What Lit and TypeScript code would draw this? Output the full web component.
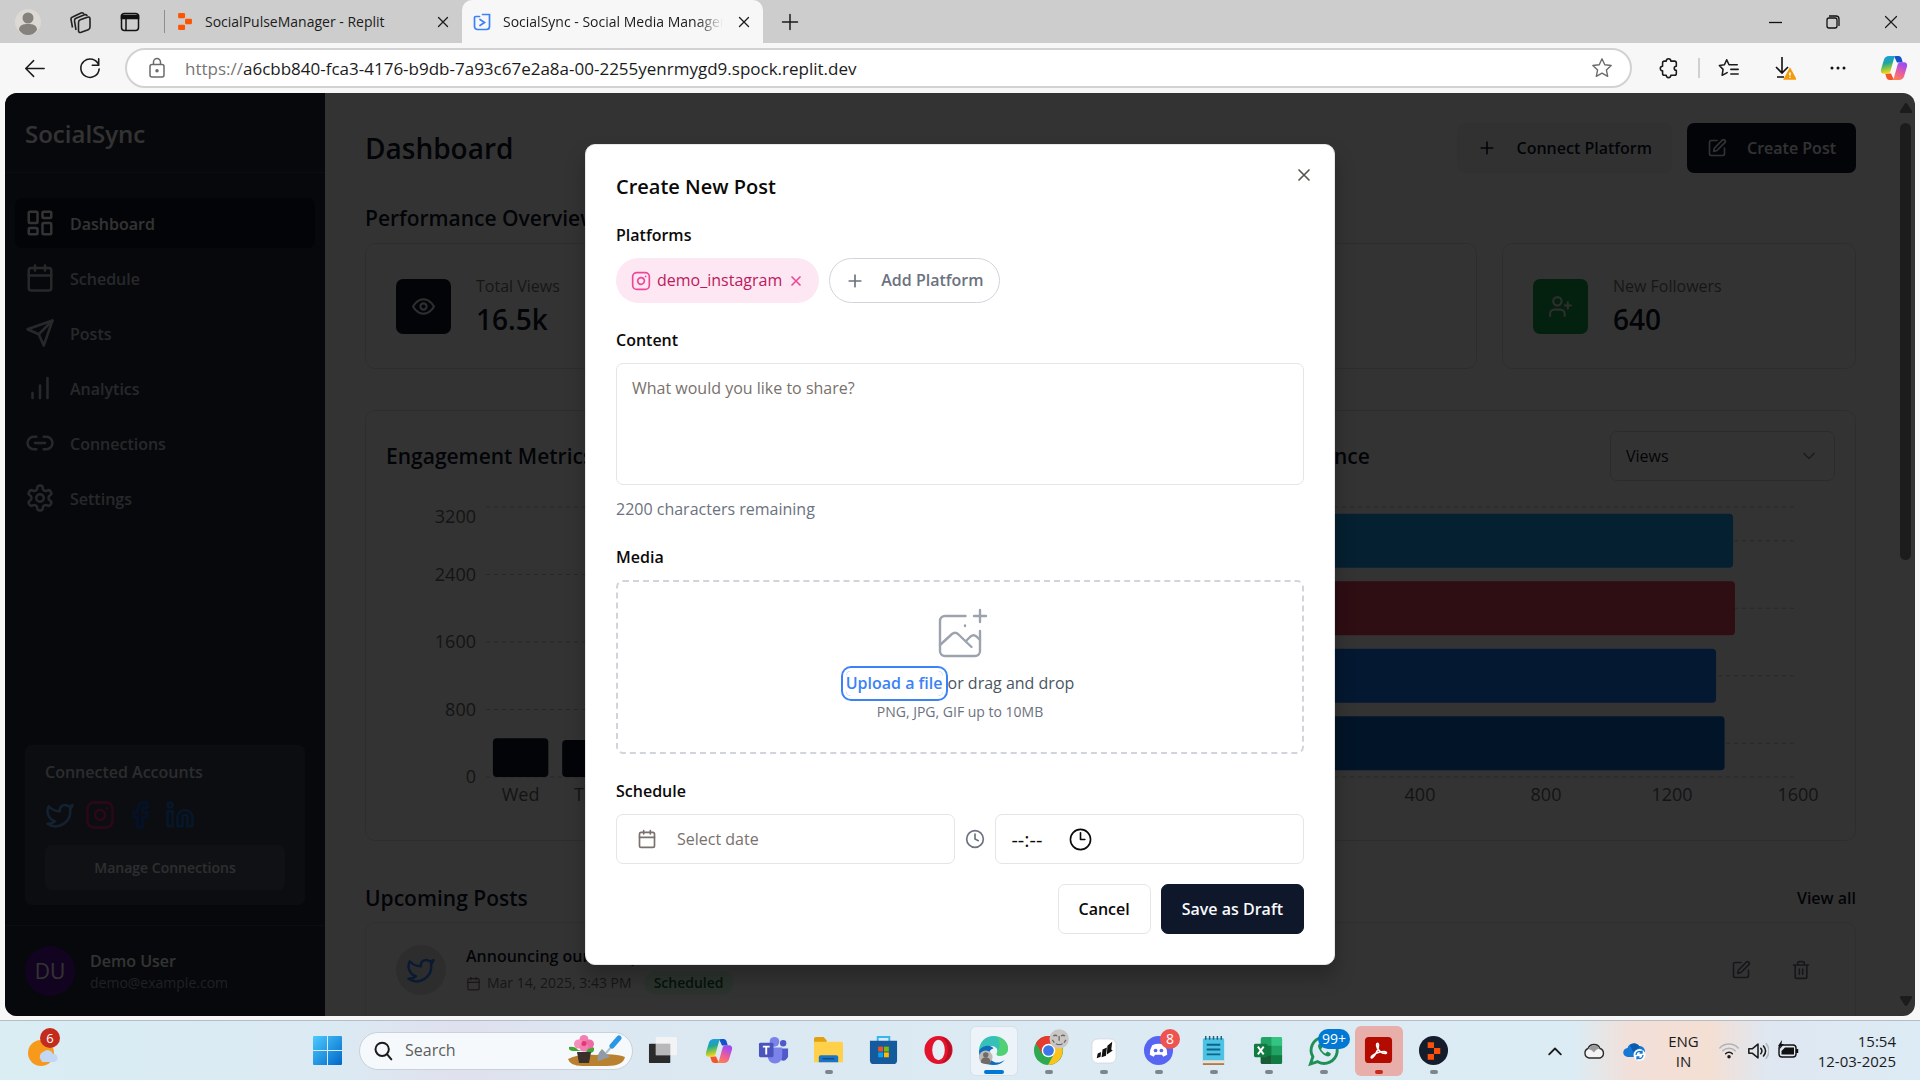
import { LitElement, html, svg, css, nothing } from "lit";
import { customElement } from "lit/decorators.js";

/* ---------- icons ---------- */

const line = (body: unknown, size = 20, width = 2) => html`<svg
  width=${size} height=${size} viewBox="0 0 24 24" fill="none" stroke="currentColor"
  stroke-width=${width} stroke-linecap="round" stroke-linejoin="round" aria-hidden="true">${body}</svg>`;

const P = {
  grid: svg`<rect x="3" y="3" width="7" height="9" rx="1"/><rect x="14" y="3" width="7" height="5" rx="1"/><rect x="14" y="12" width="7" height="9" rx="1"/><rect x="3" y="16" width="7" height="5" rx="1"/>`,
  calendar: svg`<path d="M8 2v4M16 2v4"/><rect x="3" y="4" width="18" height="18" rx="2"/><path d="M3 10h18"/>`,
  send: svg`<path d="m22 2-7 20-4-9-9-4Z"/><path d="M22 2 11 13"/>`,
  bars: svg`<path d="M6 20v-4M12 20V10M18 20V4"/>`,
  link: svg`<path d="M9 17H7A5 5 0 0 1 7 7h2"/><path d="M15 7h2a5 5 0 1 1 0 10h-2"/><path d="M8 12h8"/>`,
  gear: svg`<path d="M12.22 2h-.44a2 2 0 0 0-2 2v.18a2 2 0 0 1-1 1.73l-.43.25a2 2 0 0 1-2 0l-.15-.08a2 2 0 0 0-2.73.73l-.22.38a2 2 0 0 0 .73 2.73l.15.1a2 2 0 0 1 1 1.72v.51a2 2 0 0 1-1 1.74l-.15.09a2 2 0 0 0-.73 2.73l.22.38a2 2 0 0 0 2.73.73l.15-.08a2 2 0 0 1 2 0l.43.25a2 2 0 0 1 1 1.73V20a2 2 0 0 0 2 2h.44a2 2 0 0 0 2-2v-.18a2 2 0 0 1 1-1.73l.43-.25a2 2 0 0 1 2 0l.15.08a2 2 0 0 0 2.73-.73l.22-.39a2 2 0 0 0-.73-2.73l-.15-.08a2 2 0 0 1-1-1.74v-.5a2 2 0 0 1 1-1.74l.15-.09a2 2 0 0 0 .73-2.73l-.22-.38a2 2 0 0 0-2.73-.73l-.15.08a2 2 0 0 1-2 0l-.43-.25a2 2 0 0 1-1-1.73V4a2 2 0 0 0-2-2z"/><circle cx="12" cy="12" r="3"/>`,
  twitter: svg`<path d="M22 4s-.7 2.1-2 3.4c1.6 10-9.4 17.3-18 11.6 2.2.1 4.4-.6 6-2C3 15.500.5 9.600 3 5c2.200 2.600 5.600 4.100 9 4-.9-4.200 4-6.600 7-3.800 1.100 0 3-1.200 3-1.200z"/>`,
  instagram: svg`<rect x="2" y="2" width="20" height="20" rx="5"/><path d="M16 11.370A4 4 0 1 1 12.630 8 4 4 0 0 1 16 11.370z"/><path d="M17.500 6.500h.01"/>`,
  facebook: svg`<path d="M18 2h-3a5 5 0 0 0-5 5v3H7v4h3v8h4v-8h3l1-4h-4V7a1 1 0 0 1 1-1h3z"/>`,
  linkedin: svg`<path d="M16 8a6 6 0 0 1 6 6v7h-4v-7a2 2 0 0 0-4 0v7h-4v-7a6 6 0 0 1 6-6z"/><rect x="2" y="9" width="4" height="12"/><circle cx="4" cy="4" r="2"/>`,
  plus: svg`<path d="M5 12h14M12 5v14"/>`,
  close: svg`<path d="M18 6 6 18M6 6l12 12"/>`,
  edit: svg`<path d="M12 3H5a2 2 0 0 0-2 2v14a2 2 0 0 0 2 2h14a2 2 0 0 0 2-2v-7"/><path d="M18.375 2.625a2.120 2.120 0 0 1 3 3L12 15l-4 1 1-4Z"/>`,
  eye: svg`<path d="M2 12s3.500-7 10-7 10 7 10 7-3.500 7-10 7-10-7-10-7Z"/><circle cx="12" cy="12" r="3"/>`,
  userPlus: svg`<path d="M16 21v-2a4 4 0 0 0-4-4H6a4 4 0 0 0-4 4v2"/><circle cx="9" cy="7" r="4"/><path d="M19 8v6M22 11h-6"/>`,
  heart: svg`<path d="M19 14c1.490-1.460 3-3.210 3-5.500A5.500 5.500 0 0 0 16.500 3c-1.760 0-3 .5-4.500 2-1.500-1.500-2.740-2-4.500-2A5.500 5.500 0 0 0 2 8.500c0 2.300 1.500 4.050 3 5.500l7 7Z"/>`,
  trash: svg`<path d="M3 6h18M19 6v14a2 2 0 0 1-2 2H7a2 2 0 0 1-2-2V6M8 6V4a2 2 0 0 1 2-2h4a2 2 0 0 1 2 2v2M10 11v6M14 11v6"/>`,
  chevron: svg`<path d="m6 9 6 6 6-6"/>`,
  clock: svg`<circle cx="12" cy="12" r="10"/><path d="M12 6v6l4 2"/>`,
};

const copilot = (size: number) => html`<svg width=${size} height=${size} viewBox="0 0 28 28" aria-hidden="true">
  <defs>
    <linearGradient id="cpa" x1="0" y1="0" x2="0.2" y2="1"><stop offset="0" stop-color="#1b9cf2"/><stop offset=".45" stop-color="#1fa6a0"/><stop offset=".75" stop-color="#8cc63f"/><stop offset="1" stop-color="#f7d31e"/></linearGradient>
    <linearGradient id="cpb" x1="0.4" y1="0" x2="0" y2="1"><stop offset="0" stop-color="#a24df0"/><stop offset=".5" stop-color="#ee5f97"/><stop offset="1" stop-color="#ff8a3c"/></linearGradient>
  </defs>
  <path fill="#1552c8" d="M14 2h4.500c1.700 0 2.600 1 3.100 2.500l1.200 4H17z"/>
  <path fill="#f2552c" d="M14 26H9.500c-1.700 0-2.600-1-3.100-2.500l-1.200-4H11z"/>
  <path fill="url(#cpa)" d="M9 2h7.500c-1.300 0-2.100 1-2.600 2.700L10.500 17c-.5 1.800-1.600 2.800-3.300 2.800H4C1.500 19.800.4 18 1 15.400L4 5.500C4.800 3.200 6.400 2 9 2z"/>
  <path fill="url(#cpb)" d="M19 26h-7.500c1.300 0 2.100-1 2.600-2.700L17.500 11c.5-1.800 1.600-2.800 3.300-2.800H24c2.500 0 3.600 1.800 3 4.400l-3 9.900c-.8 2.300-2.400 3.500-5 3.500z"/>
</svg>`;

const replitMark = (s: number) => html`<svg width=${s} height=${s} viewBox="0 0 16 16" fill="#fd5402" aria-hidden="true">
  <rect x="2" y="0" width="6.500" height="5" rx="1"/><rect x="8.500" y="5.300" width="6.500" height="5.200" rx="1"/><rect x="2" y="11" width="6.500" height="5" rx="1"/></svg>`;

/* ---------- shared styles ---------- */

const base = css`
  :host { display: block; font-family: "Open Sans", "Noto Sans", sans-serif; font-size: 16px; line-height: 25px; }
  *, *::before, *::after { box-sizing: border-box; }
  button, input, textarea, select { font: inherit; color: inherit; margin: 0; }
  button { background: none; border: 0; padding: 0; display: inline-flex; align-items: center; justify-content: center; cursor: pointer; }
  a { color: inherit; text-decoration: none; }
  h1, h2, h3, p, ul { margin: 0; padding: 0; }
  ul { list-style: none; }
  svg { display: block; flex: none; }
`;

/* ---------- browser window frame ---------- */

@customElement("browser-frame")
export class BrowserFrame extends LitElement {
  static styles = [base, css`
    :host { color: #1b1b1b; font-size: 15px; }
    .tabs { height: 43px; background: #cdcdcd; display: flex; align-items: center; }
    .tools { display: flex; align-items: center; justify-content: space-between; padding: 0 24px 0 15px; width: 165px; height: 23px; border-right: 1px solid #8e8e8e; }
    .tab { display: flex; align-items: center; height: 43px; padding: 0 10px 0 11px; gap: 12px; }
    .tab.idle { width: 297px; }
    .tab.active { width: 301px; background: #f7f7f7; border-radius: 10px 10px 0 0; }
    .name { flex: 1; min-width: 0; overflow: hidden; white-space: nowrap; font-size: 14px; }
    .tab.active .name { mask-image: linear-gradient(to right, #000 88%, transparent); }
    .new { margin-left: 18px; }
    .window { margin-left: auto; display: flex; gap: 37px; padding-right: 18px; align-items: center; }
    .bar { height: 50px; background: #f7f7f7; display: flex; align-items: center; padding: 0 12px 0 24px; }
    .reload { margin: 0 24px 0 34px; }
    .address { flex: 1; height: 40px; border: 2px solid #d2d2d2; border-radius: 20px; background: #fff; display: flex; align-items: center; padding: 0 17px 0 21px; gap: 19px; font-size: 17px; }
    .url { flex: 1; white-space: nowrap; }
    .scheme { color: #767676; }
    .star { color: #6b6b6b; }
    .actions { display: flex; align-items: center; gap: 32px; margin-left: 26px; }
    .sep { width: 2px; height: 20px; background: #d0d0d0; margin: 0 -14px 0 -14px; }
  `];

  render() {
    const x = line(P.close, 18, 1.700);
    return html`
      <div class="tabs">
        <div class="tools">
          <svg width="26" height="28" viewBox="0 0 26 28"><circle cx="13" cy="14" r="13" fill="#dcd9d4"/><circle cx="13" cy="10" r="5.500" fill="#85817d"/><path d="M4 22c0-5 4-6 9-6s9 1 9 6c-2 3-5 5-9 5s-7-2-9-5z" fill="#85817d"/></svg>
          <button aria-label="Workspaces"><svg width="24" height="24" viewBox="0 0 24 24" fill="#cdcdcd" stroke="#222" stroke-width="1.600" stroke-linejoin="round"><path d="M3.500 17.500 2 9.500Q1.700 7.500 3.600 7L12 3q2-.8 3 1"/><path d="M7 20 5.500 11Q5.200 9 7 8.300l8.500-3.500q2-.6 2.800 1"/><path d="M9.500 12.500q0-2 1.800-2.700l7-2.600q2.700-.8 2.700 1.800v8q0 2-1.800 2.700l-7 2.600q-2.700.8-2.700-1.800z"/></svg></button>
          <button aria-label="Tab actions"><svg width="20" height="20" viewBox="0 0 20 20" fill="none" stroke="#111" stroke-width="1.500"><rect x="1.500" y="1.500" width="17" height="17" rx="3"/><path d="M1.500 3.500h17v3h-17z" fill="#111"/><path d="M6 6v12"/></svg></button>
        </div>
        <div class="tab idle">${replitMark(17)}<span class="name">SocialPulseManager - Replit</span><button aria-label="Close tab">${x}</button></div>
        <div class="tab active">
          <svg width="18" height="18" viewBox="0 0 18 18" fill="none" stroke="#3b82f6" stroke-width="1.700" stroke-linecap="round"><path d="M9.500 1.500H16.500v12a3 3 0 0 1-3 3h-9a3 3 0 0 1-3-3v-9q0-1 1-1h4"/><path d="m7 6.500 4.500 3L7 12.500"/></svg>
          <span class="name">SocialSync - Social Media Management</span><button aria-label="Close tab">${x}</button>
        </div>
        <button class="new" aria-label="New tab">${line(svg`<path d="M2 12h20M12 2v20"/>`, 18, 2)}</button>
        <div class="window">
          <button aria-label="Minimize"><svg width="20" height="20" viewBox="0 0 20 20" stroke="#111" stroke-width="1.300"><path d="M3 10.500h13"/></svg></button>
          <button aria-label="Restore"><svg width="20" height="20" viewBox="0 0 20 20" stroke="#111" stroke-width="1.300" fill="none"><rect x="4" y="6" width="10" height="10" rx="2"/><path d="M6 4h7a3 3 0 0 1 3 3v7"/></svg></button>
          <button aria-label="Close">${line(P.close, 22, 1.300)}</button>
        </div>
      </div>
      <div class="bar">
        <button aria-label="Back">${line(svg`<path d="M23 12H2M11 3l-9 9 9 9"/>`, 21, 1.700)}</button>
        <button class="reload" aria-label="Reload">${line(svg`<path d="M21.500 9A10 10 0 1 0 22 13M21.500 2v7h-7"/>`, 22, 1.700)}</button>
        <div class="address">
          <svg width="18" height="22" viewBox="0 0 18 22" fill="none" stroke="#6b6b6b" stroke-width="1.500"><rect x="2" y="7.500" width="14" height="12.500" rx="2"/><path d="M5.500 7.500V5a3.500 3.500 0 0 1 7 0v2.500"/><circle cx="9" cy="13.800" r="1" fill="#6b6b6b"/></svg>
          <span class="url"><span class="scheme">https://</span>a6cbb840-fca3-4176-b9db-7a93c67e2a8a-00-2255yenrmygd9.spock.replit.dev</span>
          <button class="star" aria-label="Favorite">${line(svg`<path d="m12 2 3 6.500 7 .8-5.200 4.800 1.400 7L12 17.600l-6.200 3.500 1.400-7L2 9.300l7-.8z"/>`, 22, 1.500)}</button>
        </div>
        <div class="actions">
          <button aria-label="Extensions">${line(svg`<path d="M9 4.500a2.500 2.500 0 0 1 5 0h4a2 2 0 0 1 2 2V10a2.300 2.300 0 1 0 0 4.600V18a2 2 0 0 1-2 2h-4a2.500 2.500 0 0 1-5 0H7a2 2 0 0 1-2-2v-3a2.500 2.500 0 0 1 0-5V6.500a2 2 0 0 1 2-2z"/>`, 22, 1.700)}</button>
          <span class="sep"></span>
          <button aria-label="Favorites">${line(svg`<path d="m9.500 3 2.500 5.500h9M9.500 3 7 8.500l-5.500.7 4 4.300-1 6.500 5.500-3M14 13.500h8M14 18.500h8"/>`, 22, 1.700)}</button>
          <button aria-label="Downloads"><svg width="24" height="24" viewBox="0 0 24 24" fill="none" stroke="#111" stroke-width="1.600"><path d="M10 1v16M4 11l6 6 6-6M5 21h7"/><path d="m18 13 5.500 10h-11z" fill="#f59b0b" stroke="#f59b0b"/><path d="M18 16.500v3M18 20.700v1" stroke="#fff"/></svg></button>
          <button aria-label="Menu"><svg width="20" height="20" viewBox="0 0 20 20" fill="#111"><circle cx="4" cy="10" r="1.500"/><circle cx="10" cy="10" r="1.500"/><circle cx="16" cy="10" r="1.500"/></svg></button>
          <button aria-label="Copilot">${copilot(28)}</button>
        </div>
      </div>`;
  }
}

/* ---------- sidebar ---------- */

const NAV = [
  ["Dashboard", P.grid], ["Schedule", P.calendar], ["Posts", P.send],
  ["Analytics", P.bars], ["Connections", P.link], ["Settings", P.gear],
] as const;

@customElement("side-nav")
export class SideNav extends LitElement {
  static styles = [base, css`
    :host { width: 320px; flex: none; background: #1f2937; color: #fff; display: flex; flex-direction: column; }
    .brand { height: 80px; padding: 2px 20px 0; display: flex; align-items: center; border-bottom: 1px solid #374151; font-size: 24px; font-weight: 600; }
    .nav { flex: 1; padding: 25px 10px; display: flex; flex-direction: column; gap: 5px; }
    .item { height: 50px; padding: 0 10px; gap: 15px; display: flex; align-items: center; border-radius: 7px; color: #c3c8d0; font-weight: 600; }
    .item span { padding-top: 2px; }
    .item.on { background: #0f172a; color: #fff; }
    .accounts { margin: 0 20px 20px; padding: 15px 20px; background: #374151; border-radius: 7px; display: flex; flex-direction: column; gap: 15px; }
    .accounts h3 { font-size: 16px; font-weight: 600; color: #d9dce1; }
    .icons { display: flex; gap: 10px; }
    .tw { color: #60a5fa; } .ig { color: #db2777; } .fb { color: #1557d0; } .in { color: #1f70d6; }
    .manage { height: 45px; background: #4b5563; border-radius: 7px; font-size: 14px; font-weight: 600; color: #e5e7eb; }
    .user { border-top: 1px solid #374151; padding: 20px; display: flex; align-items: center; gap: 15px; }
    .avatar { width: 50px; height: 50px; border-radius: 50%; background: #5b10a0; display: grid; place-items: center; font-size: 21px; }
    .who { font-weight: 600; line-height: 24px; }
    .mail { font-size: 14px; line-height: 20px; color: #9ca3af; }
  `];

  render() {
    return html`
      <div class="brand">SocialSync</div>
      <nav class="nav">
        ${NAV.map(([name, icon], i) => html`<a href="#" class="item ${i === 0 ? "on" : ""}">${line(icon, 30)}<span>${name}</span></a>`)}
      </nav>
      <section class="accounts">
        <h3>Connected Accounts</h3>
        <div class="icons">
          <span class="tw">${line(P.twitter, 30)}</span><span class="ig">${line(P.instagram, 30)}</span>
          <span class="fb">${line(P.facebook, 30)}</span><span class="in">${line(P.linkedin, 30)}</span>
        </div>
        <button class="manage">Manage Connections</button>
      </section>
      <div class="user">
        <span class="avatar">DU</span>
        <div><p class="who">Demo User</p><p class="mail">demo@example.com</p></div>
      </div>`;
  }
}

/* ---------- dashboard ---------- */

const STATS = [
  { label: "Total Views", value: "16.5k", icon: P.eye, tone: "navy" },
  { label: "Engagement", value: "8.2k", icon: P.heart, tone: "pink" },
  { label: "Posts", value: "24", icon: P.send, tone: "blue" },
  { label: "New Followers", value: "640", icon: P.userPlus, tone: "green" },
];
const DAYS: [string, number][] = [["Wed", 460], ["Thu", 440], ["Fri", 1400], ["Sat", 2200], ["Sun", 2600], ["Mon", 2800], ["Tue", 3000], ["Wed", 2900]];
const NETWORKS: [string, number, string][] = [["Twitter", 1394, "#1da1f2"], ["Instagram", 1400, "#e4405f"], ["Facebook", 1340, "#1877f2"], ["LinkedIn", 1367, "#0a66c2"]];
const PLOT = 270;

@customElement("dashboard-view")
export class DashboardView extends LitElement {
  static styles = [base, css`
    :host { flex: 1; min-width: 0; overflow: hidden; padding: 30px 40px 0; background: #fff; color: #0f172a; }
    .top { display: flex; align-items: center; justify-content: space-between; margin-bottom: 30px; }
    h1 { font-size: 28px; line-height: 50px; font-weight: 600; }
    h2 { font-size: 21px; line-height: 30px; font-weight: 600; }
    .acts { display: flex; gap: 15px; }
    .btn { height: 50px; padding: 0 20px; gap: 20px; border-radius: 7px; font-weight: 600; background: #f5f5f4; }
    .btn.dark { background: #0f172a; color: #f8fafc; }
    .stats { display: grid; grid-template-columns: repeat(4, 1fr); gap: 25px; margin: 10px 0 41px; }
    .card { border: 1px solid #e0e2e6; border-radius: 10px; background: #fff; }
    .stat { height: 126px; display: flex; align-items: center; padding: 0 30px; gap: 25px; }
    .tile { width: 55px; height: 55px; border-radius: 7px; display: grid; place-items: center; color: #e5e7eb; }
    .navy { background: #0f172a; } .pink { background: #db2777; } .blue { background: #2563eb; } .green { background: #16a34a; }
    .label { font-weight: 500; color: #78716c; }
    .value { font-size: 28px; line-height: 40px; font-weight: 600; }
    .charts { display: grid; grid-template-columns: 1fr 1fr; gap: 25px; margin-bottom: 42px; }
    .chart { padding: 20px 20px 63px; }
    .head { display: flex; align-items: center; justify-content: space-between; height: 50px; margin-bottom: 26px; }
    .pick { display: grid; grid-template-columns: 1fr; align-items: center; width: 225px; height: 50px; border: 1px solid #d4d8de; border-radius: 7px; }
    .pick select { grid-area: 1 / 1; appearance: none; border: 0; background: none; height: 48px; padding: 0 15px; }
    .pick svg { grid-area: 1 / 1; justify-self: end; margin-right: 15px; opacity: .5; pointer-events: none; }
    .plot { display: block; height: 270px; overflow: visible; font-size: 18px; fill: #666; }
    .wide { width: calc(100% - 137px); margin-left: 100px; }
    .narrow { width: calc(100% - 187px); margin-left: 150px; }
    .rule { stroke: #c4c4c4; stroke-dasharray: 4 4; }
    .end { text-anchor: end; } .mid { text-anchor: middle; }
    .posts { display: flex; justify-content: space-between; align-items: center; margin-bottom: 9px; }
    .all { font-weight: 600; }
    .post { display: flex; align-items: flex-start; gap: 20px; height: 140px; padding: 22px 30px 0; border-color: #ececec; }
    .badge { width: 50px; height: 50px; border-radius: 50%; background: #dfe0e2; color: #3b82f6; display: grid; place-items: center; }
    .body { flex: 1; }
    .title { font-weight: 600; line-height: 22px; }
    .meta { display: flex; align-items: center; gap: 6px; margin-top: 4px; font-size: 14px; color: #78716c; line-height: 24px; }
    .state { margin-left: 6px; padding: 0 10px; border-radius: 12px; background: #dcfce7; color: #166534; font-weight: 600; }
    .icons { display: flex; gap: 40px; padding: 15px 14px 0 0; color: #6b7280; }
  `];

  private engagement() {
    const step = 100 / DAYS.length;
    return html`<svg class="plot wide" role="img" aria-label="Engagement by day">
      ${[3200, 2400, 1600, 800, 0].map((v, i) => svg`
        <line class="rule" x1="0" x2="100%" y1=${i * PLOT / 4} y2=${i * PLOT / 4}></line>
        <text class="end" x="-10" y=${i === 0 ? 16 : i * PLOT / 4 + 6}>${v}</text>`)}
      ${DAYS.map(([d, v], i) => svg`
        <rect x="${(i + .1) * step}%" width="${step * .8}%" y=${PLOT - v / 3200 * PLOT} height=${v / 3200 * PLOT} rx="4" fill="#0f172a"></rect>
        <text class="mid" x="${(i + .5) * step}%" y=${PLOT + 24}>${d}</text>`)}
    </svg>`;
  }

  private networks() {
    const row = PLOT / 4;
    return html`<svg class="plot narrow" role="img" aria-label="Views by platform">
      <line class="rule" x1="0" x2="100%" y1="0" y2="0"></line>
      <line class="rule" x1="0" x2="100%" y1=${PLOT} y2=${PLOT}></line>
      ${NETWORKS.map(([n, v, c], i) => svg`
        <line class="rule" x1="0" x2="100%" y1=${(i + .5) * row} y2=${(i + .5) * row}></line>
        <text class="end" x="-10" y=${(i + .5) * row + 6}>${n}</text>
        <rect x="0" width="${v / 16}%" y=${(i + .1) * row} height=${row * .8} rx="4" fill=${c}></rect>`)}
      ${[0, 400, 800, 1200, 1600].map(v => svg`<text class="mid" x="${v / 16}%" y=${PLOT + 24}>${v}</text>`)}
    </svg>`;
  }

  private pick(name: string) {
    return html`<div class="pick"><select aria-label=${name}><option>Views</option></select>${line(P.chevron, 20)}</div>`;
  }

  render() {
    return html`
      <header class="top">
        <h1>Dashboard</h1>
        <div class="acts">
          <button class="btn">${line(P.plus)}Connect Platform</button>
          <button class="btn dark">${line(P.edit)}Create Post</button>
        </div>
      </header>
      <h2>Performance Overview</h2>
      <div class="stats">
        ${STATS.map(s => html`<div class="card stat"><span class="tile ${s.tone}">${line(s.icon, 25)}</span>
          <div><p class="label">${s.label}</p><p class="value">${s.value}</p></div></div>`)}
      </div>
      <div class="charts">
        <section class="card chart"><div class="head"><h2>Engagement Metrics</h2></div>${this.engagement()}</section>
        <section class="card chart"><div class="head"><h2>Platform Performance</h2>${this.pick("Metric")}</div>${this.networks()}</section>
      </div>
      <div class="posts"><h2>Upcoming Posts</h2><a class="all" href="#">View all</a></div>
      <article class="card post">
        <span class="badge">${line(P.twitter, 30)}</span>
        <div class="body">
          <p class="title">Announcing our new product</p>
          <p class="meta">${line(P.calendar, 15)}<span>Mar 14, 2025, 3:43 PM</span><span class="state">Scheduled</span></p>
        </div>
        <div class="icons"><button aria-label="Edit post">${line(P.edit)}</button><button aria-label="Delete post">${line(P.trash)}</button></div>
      </article>`;
  }
}

/* ---------- create-post dialog ---------- */

@customElement("post-dialog")
export class PostDialog extends LitElement {
  static styles = [base, css`
    :host { width: 750px; max-width: 100%; }
    .dialog { position: relative; background: #fff; color: #0c0a09; border: 1px solid #e5e7eb; border-radius: 10px; padding: 30px; box-shadow: 0 12px 20px rgba(0, 0, 0, .25); }
    h2 { font-size: 20px; line-height: 23px; font-weight: 600; }
    .close { position: absolute; top: 20px; right: 20px; color: #57534e; }
    .field { margin-top: 25px; display: flex; flex-direction: column; gap: 10px; }
    .name { font-weight: 600; }
    .chips { display: flex; gap: 10px; }
    .chip { height: 45px; border-radius: 23px; background: #fce7f3; color: #be185d; display: flex; align-items: center; gap: 6px; padding: 0 15px; }
    .chip svg:first-child { color: #ec4899; }
    .chip button svg { color: #be185d; }
    .add { height: 45px; border-radius: 23px; border: 1px solid #d1d5db; color: #6b7280; gap: 16px; padding: 0 15px; font-weight: 600; }
    textarea { display: block; width: 100%; height: 122px; border: 1px solid #e5e5e5; border-radius: 7px; padding: 12px 15px; resize: none; line-height: 25px; }
    ::placeholder { color: #78716c; opacity: 1; }
    .count { color: #6b7280; margin-top: 2px; margin-bottom: -2px; }
    .drop { border: 2px dashed #d1d5db; border-radius: 7px; height: 174px; display: flex; flex-direction: column; align-items: center; padding-top: 24px; }
    .line { display: flex; gap: 5px; margin: 5px 0; color: #4b5563; }
    .upload { color: #3b82f6; font-weight: 600; border-radius: 5px; line-height: 25px; box-shadow: 0 0 0 3px #fff, 0 0 0 5px #3b82f6; cursor: pointer; }
    .upload input { display: none; }
    .hint { font-size: 14px; line-height: 22px; color: #6b7280; }
    .when { display: grid; grid-template-columns: 11fr auto 10fr; gap: 10px; align-items: center; color: #6b7280; }
    .date, .time { height: 50px; border: 1px solid #e5e5e5; border-radius: 7px; display: flex; align-items: center; }
    .date { justify-content: flex-start; padding: 0 20px; gap: 20px; color: #78716c; }
    .time { padding: 0 15px; gap: 14px; color: #0c0a09; min-width: 0; }
    .time input { width: 44px; border: 0; padding: 0; outline: 0; background: none; font-size: 20px; }
    .time ::placeholder { color: #0c0a09; }
    .foot { margin-top: 20px; display: flex; justify-content: flex-end; gap: 10px; }
    .btn { height: 50px; padding: 0 20px; border-radius: 7px; border: 1px solid #e5e5e5; font-weight: 600; }
    .btn.dark { background: #0f172a; border-color: #0f172a; color: #f8fafc; }
  `];

  render() {
    return html`
      <div class="dialog" role="dialog" aria-labelledby="heading">
        <h2 id="heading">Create New Post</h2>
        <button class="close" aria-label="Close">${line(P.close)}</button>
        <div class="field">
          <span class="name">Platforms</span>
          <div class="chips">
            <span class="chip">${line(P.instagram)}demo_instagram<button aria-label="Remove demo_instagram">${line(P.close, 16, 2.500)}</button></span>
            <button class="add">${line(P.plus)}Add Platform</button>
          </div>
        </div>
        <div class="field">
          <label class="name" for="content">Content</label>
          <textarea id="content" placeholder="What would you like to share?"></textarea>
          <span class="count">2200 characters remaining</span>
        </div>
        <div class="field">
          <span class="name">Media</span>
          <div class="drop">
            <svg width="60" height="60" viewBox="0 0 60 60" fill="none" stroke="#9ca3af" stroke-width="2.400" stroke-linecap="round" stroke-linejoin="round" aria-hidden="true">
              <path d="M35.500 10H15a5 5 0 0 0-5 5v30a5 5 0 0 0 5 5h30a5 5 0 0 0 5-5V25"/>
              <path d="M50 4v12M44 10h12M35 19.500v.5"/>
              <path d="m10 39 12-11c2-1.700 4-1.700 6 0l13.500 13"/>
              <path d="m36 35 4.500-4.500c2-1.600 4-1.600 6 0L50 34"/>
            </svg>
            <div class="line"><label class="upload">Upload a file<input type="file"></label><span>or drag and drop</span></div>
            <span class="hint">PNG, JPG, GIF up to 10MB</span>
          </div>
        </div>
        <div class="field">
          <span class="name">Schedule</span>
          <div class="when">
            <button class="date">${line(P.calendar)}Select date</button>
            ${line(P.clock)}
            <div class="time"><input aria-label="Time" placeholder="--:--">${line(svg`<circle cx="12" cy="12" r="10.500"/><path d="M12 5v7h4.500"/>`, 23, 1.700)}</div>
          </div>
        </div>
        <div class="foot"><button class="btn">Cancel</button><button class="btn dark">Save as Draft</button></div>
      </div>`;
  }
}

/* ---------- taskbar ---------- */

const APPS: { name: string; icon: unknown; run?: string; tile?: string; badge?: string; tone?: string }[] = [
  { name: "Task view", icon: svg`<rect x="1" y="9" width="22" height="20" rx="1" fill="#2b2b2b"/><rect x="8" y="2" width="22" height="19" rx="1" fill="#f4f4f4" opacity=".85"/><path d="M8 9h15v12H8z" fill="#999" opacity=".5"/>` },
  { name: "Copilot", icon: null },
  { name: "Teams", icon: svg`<circle cx="17" cy="7" r="5" fill="#7b83eb"/><circle cx="26" cy="8.500" r="3.300" fill="#5059c9"/><path d="M22 14h9v8a5 5 0 0 1-7 4z" fill="#5059c9"/><path d="M10 13h15v9a7.500 7.500 0 0 1-15 0z" fill="#7b83eb"/><rect x="1" y="8" width="15" height="15" rx="1.500" fill="#4b53bc"/><path d="M5 12h7M8.500 12v8" stroke="#fff" stroke-width="2"/>` },
  { name: "File Explorer", run: "idle", icon: svg`<path d="M1 4q0-2 2-2h8l3 3.500v4H1z" fill="#e0a010"/><path d="M1 7h28q2 0 2 2v19H1z" fill="#ffd04a"/><path d="M6 28v-5q0-2 2-2h16q2 0 2 2v5z" fill="#1c75c4"/><path d="M10 24.500h12" stroke="#0c4f8d" stroke-width="1.500"/>` },
  { name: "Store", icon: svg`<path d="M10 7V2h12v5" fill="none" stroke="#35b8f1" stroke-width="2"/><path d="M2 6h28v20q0 4-4 4H6q-4 0-4-4z" fill="#155a9c"/><path d="M10.500 12h5v5h-5z" fill="#f25022"/><path d="M16.500 12h5v5h-5z" fill="#7fba00"/><path d="M10.500 18h5v5h-5z" fill="#00a4ef"/><path d="M16.500 18h5v5h-5z" fill="#ffb900"/>` },
  { name: "Opera", icon: svg`<circle cx="16" cy="15.500" r="14.500" fill="#e3122d"/><ellipse cx="16" cy="15.500" rx="6.500" ry="10.500" fill="#e6eff5"/><path d="M19 1.500a14.500 14.500 0 0 1 0 28c9-7 9-21 0-28z" fill="#a30d1f" opacity=".7"/>` },
  { name: "Edge", run: "active", tile: "lit", icon: svg`<path d="M1 17C1 7 8 1 16 1c9 0 15 6 15 13 0 5-4 7.500-8 7.500-3 0-4.500-1-3.500-3 2-4-2-7.500-6.500-7-6 .5-9 3-12 5.500z" fill="#35c1b8"/><path d="M20 2c7 1.500 11 6.500 11 12 0 5-4 7.500-8 7.500-3 0-4.500-1-3.500-3 2-4 5-9 .5-16.500z" fill="#5bd65a" opacity=".75"/><path d="M1 17c2-6 12-8 15-3-5 1-6 7-3 11 4 5 10 4 15 .5C25 29 21 31 16 31 7 31 1 25 1 17z" fill="#0f6cbd"/><circle cx="8" cy="23" r="7" fill="#bdb9b5"/><circle cx="8" cy="20.500" r="2.800" fill="#6f6b68"/><path d="M3 27q1-4 5-4t5 4-5 3-5-3z" fill="#6f6b68"/>` },
  { name: "Chrome", run: "idle", icon: svg`<circle cx="16" cy="16" r="15" fill="#2da94f"/><path d="M3 8.500A15 15 0 0 1 29 8.500L16 10z" fill="#e33b2e"/><path d="M3 8.500 10 20l6-10h13.500A15 15 0 0 0 3 8.500z" fill="#e33b2e"/><path d="M29 9H16l6 10-6.500 12A15 15 0 0 0 29 9z" fill="#fcc31e"/><circle cx="16" cy="16" r="7" fill="#fff"/><circle cx="16" cy="16" r="5.500" fill="#3b78e7"/><g transform="translate(1 -1)"><circle cx="26" cy="5" r="10" fill="#c9c6c3"/><path d="M20 2q2-1.500 4 0m4 0q2-1.500 4 0M26 2v5M22.500 10q3.500 2 7 0M19 6l2 3m12-3-2 3" stroke="#6a6866" stroke-width="1.300" fill="none"/></g>` },
  { name: "Trading app", run: "idle", icon: svg`<rect x="4" y="4" width="25" height="25" rx="6" fill="#fff" stroke="#d5dbe0"/><path d="m9 24 1-5 3.500-1.500-.5 5zM14 23l1-8 4.500-2-1 8.500zM19.500 20l.5-9 5-4-1 8 1.500 1z" fill="#111"/>` },
  { name: "Discord", run: "idle", badge: "8", tone: "red", icon: svg`<circle cx="16" cy="16" r="15" fill="#5865f2"/><path d="M9.500 10.500q6.500-3 13 0 3 5 2.500 10l-4 2-1.500-2h-7l-1.500 2-4-2q-.5-5 2.500-10z" fill="#fff"/><circle cx="13" cy="16" r="1.900" fill="#5865f2"/><circle cx="19" cy="16" r="1.900" fill="#5865f2"/>` },
  { name: "Notepad", run: "idle", icon: svg`<rect x="5" y="3" width="22" height="26" rx="2" fill="#4cc2e4"/><path d="M5 26h22v3q0 2-2 2H7q-2 0-2-2z" fill="#e9e2da"/><path d="M5 30h22" stroke="#a4601c" stroke-width="1.500"/><path d="M8 1v4M12 1v4M16 1v4M20 1v4M24 1v4" stroke="#245e76" stroke-width="1.500"/><path d="M9 10h14M9 15h14M9 20h14" stroke="#0c6487" stroke-width="2"/>` },
  { name: "Excel", run: "idle", icon: svg`<rect x="8" y="2" width="22" height="28" rx="2" fill="#21a366"/><path d="M19 2h9q2 0 2 2v7H19z" fill="#33c481"/><path d="M8 11h11v10H8zM19 21h11v7q0 2-2 2h-9z" fill="#107c41"/><path d="M8 21h11v9h-9q-2 0-2-2z" fill="#185c37"/><rect x="1" y="9" width="14" height="14" rx="1.500" fill="#107c41"/><path d="m5 12 6 8M11 12l-6 8" stroke="#fff" stroke-width="2"/>` },
  { name: "WhatsApp", run: "idle", badge: "99+", tone: "blue", icon: svg`<path d="M2.500 30 5 22.500A13.500 13.500 0 1 1 10 27.500z" fill="none" stroke="#1f8f55" stroke-width="3"/><path d="M11 9.500c-3 3 5.500 13.500 10.500 12.500 2-.5 2.500-3 1.500-3.500l-3-1.500-2 2c-2-.5-4-3-4.500-4.500l1.500-1.500-1.500-3.500c-.5-.8-1.800-.5-2.500 0z" fill="#1f8f55"/>` },
  { name: "Acrobat", run: "alert", tile: "rose", icon: svg`<rect x="2" y="2" width="28" height="27" rx="4" fill="#b30b00"/><path d="M9.500 23.500c3-2.500 6.500-8 6.500-13 0-2.500-2-2.500-2 0 .5 5 5 8.500 9 8.500 2 0 1.500-2-1-2-4 0-8.500 1.500-12 4-2 1.500-2 3-.5 2.500z" fill="none" stroke="#fff" stroke-width="1.700"/>` },
  { name: "Replit", run: "idle", icon: svg`<circle cx="16" cy="16" r="15" fill="#151c2c"/><path d="M10 7.500h6.500v6H10zM16.500 13.500H23v6h-6.500zM10 19.500h6.500v6H10z" fill="#fb4f0a"/>` },
];

@customElement("task-bar")
export class TaskBar extends LitElement {
  static styles = [base, css`
    :host { height: 60px; border-top: 1px solid #b4bec8; color: #1b1b1b; display: grid; grid-template-columns: 300px auto 1fr; align-items: center;
      background: linear-gradient(to right, #d9edf3 0, #dbe9f3 18%, #e0e0ee 24%, #dbe8f2 32%, #dcecf4 82%, #f2dfd8 85%, #f4dfd3 89%, #dfe7f1 92%, #dcebf5 100%); }
    .weather { position: relative; width: 32px; margin-left: 26px; }
    .count { position: absolute; min-width: 20px; height: 20px; border-radius: 10px; color: #fff; font-size: 13px; line-height: 20px; text-align: center; }
    .count.red { background: #c42b1c; top: -5px; right: -2px; }
    .middle { display: flex; align-items: center; }
    .cell { position: relative; width: 55px; height: 59px; }
    .search { display: flex; align-items: center; gap: 12px; width: 274px; height: 38px; margin: 0 7px 0 4px; padding: 0 6px 0 13px; border-radius: 19px; background: #f5f9fc; border: 1px solid #c9d1da; }
    .search input { flex: 1; min-width: 0; border: 0; padding: 0; background: none; outline: 0; font-size: 16px; }
    .search ::placeholder { color: #5d5d5d; opacity: 1; }
    .apps { display: flex; margin-left: -4px; }
    .tile { width: 48px; height: 50px; border-radius: 6px; display: grid; place-items: center; }
    .tile.lit { background: #ecf4f9; border: 1px solid #d5e0e8; }
    .tile.rose { background: #e8aeaa; }
    .mark { position: absolute; bottom: 6px; left: 50%; transform: translateX(-50%); height: 4px; width: 8px; border-radius: 2px; background: #7d868c; }
    .mark.active { width: 20px; background: #0078d4; }
    .mark.alert { background: #c42b1c; }
    .tag { position: absolute; top: 8px; left: 29px; height: 20px; min-width: 20px; padding: 0 4px; border-radius: 10px; color: #fff; font-size: 14px; line-height: 20px; text-align: center; }
    .tag.red { background: #ef5350; } .tag.blue { background: #0078d4; left: 22px; }
    .tray { display: flex; align-items: center; justify-content: flex-end; padding-right: 24px; font-size: 15px; line-height: 20px; }
    .tray button { margin-right: 18px; }
    .lang { text-align: center; margin: 0 20px 0 4px; }
    .quick { display: flex; gap: 8px; margin-right: 19px; }
    .date { text-align: right; }
  `];

  render() {
    return html`
      <button class="weather" aria-label="Weather">
        <svg width="32" height="36" viewBox="0 0 32 36"><circle cx="15" cy="20" r="13" fill="#f79a1c"/><path d="M15 27a5 5 0 0 1 2-8 6 6 0 0 1 10 2 4 4 0 0 1 1 8H16z" fill="#c3d7f5"/></svg>
        <span class="count red">6</span>
      </button>
      <div class="middle">
        <button class="cell" aria-label="Start"><svg width="29" height="29" viewBox="0 0 29 29"><defs><linearGradient id="win" x2="1" y2="1"><stop stop-color="#4ccbff"/><stop offset="1" stop-color="#0067c8"/></linearGradient></defs><path fill="url(#win)" d="M0 1q0-1 1-1h13v14H0zM15 0h13q1 0 1 1v13H15zM0 15h14v14H1q-1 0-1-1zM15 15h14v13q0 1-1 1H15z"/></svg></button>
        <label class="search">${line(svg`<circle cx="11" cy="10" r="8"/><path d="m17 16 5 6"/>`, 20, 2.400)}<input aria-label="Search" placeholder="Search">
          <svg width="60" height="32" viewBox="0 0 60 32"><path d="M2 24q12-6 28-4 18-2 29 2-2 9-18 9H16Q4 31 2 24z" fill="#b9802f"/><path d="M16 16h-8q-6 0-5-4 6-1 9 3zM19 16q6-6 9-3 1 5-5 5z" fill="#3fa535"/><path d="M11 17h14l-2 11H13z" fill="#3a2f2c"/><circle cx="18" cy="4.500" r="4.500" fill="#f27fb2"/><circle cx="12.500" cy="9" r="4.500" fill="#f58fbd"/><circle cx="23.500" cy="9" r="4.500" fill="#ee6ba5"/><circle cx="18" cy="12" r="4.500" fill="#f27fb2"/><circle cx="18" cy="8.500" r="2.500" fill="#e5396d"/><path d="m36 14 8 8-12 4q-2-6 4-12z" fill="#8f9ba6"/><path d="m40 18 7-8" stroke="#b7c0c8" stroke-width="2"/><path d="m46 11 7-8" stroke="#2a96e8" stroke-width="5" stroke-linecap="round"/></svg>
        </label>
        <div class="apps">
          ${APPS.map(a => html`<button class="cell" aria-label=${a.name}>
            <span class="tile ${a.tile ?? ""}">${a.icon ? html`<svg width="31" height="31" viewBox="0 0 32 32" overflow="visible">${a.icon}</svg>` : copilot(28)}</span>
            ${a.run ? html`<span class="mark ${a.run}"></span>` : nothing}
            ${a.badge ? html`<span class="tag ${a.tone ?? ""}">${a.badge}</span>` : nothing}
          </button>`)}
        </div>
      </div>
      <div class="tray">
        <button aria-label="Hidden icons">${line(svg`<path d="m5 16 7-7 7 7"/>`, 20, 2.200)}</button>
        <button aria-label="Cloud"><svg width="22" height="20" viewBox="0 0 22 20"><path d="M6 17a5 5 0 0 1-1-9.500 6.500 6.500 0 0 1 12 0A5 5 0 0 1 17 17z" fill="#f3f3f3" stroke="#2b2b2b" stroke-width="1.400"/><path d="M5.500 8a6 6 0 0 1 11-.5Q13 8 11 11.500 9 8.500 5.500 8z" fill="#9a9a9a"/></svg></button>
        <button aria-label="OneDrive"><svg width="23" height="20" viewBox="0 0 23 20"><path d="M5 16a4.500 4.500 0 0 1-.5-9A6.500 6.500 0 0 1 16 5a5 5 0 0 1 1 11z" fill="#1478d4"/><path d="M7 4a6.500 6.500 0 0 1 10 2L10 11z" fill="#0b5cad"/><circle cx="16.500" cy="14" r="6" fill="#fff"/><path d="M13 14a3.500 3.500 0 0 1 6-2.500m1 2.500a3.500 3.500 0 0 1-6 2.500M19 9.500v2.500h-2.500M14 18.500V16h2.500" fill="none" stroke="#1478d4" stroke-width="1.300"/></svg></button>
        <div class="lang">ENG<br>IN</div>
        <div class="quick">
          ${line(svg`<path d="M1 9.500a15.500 15.500 0 0 1 22 0M4.500 13a10.500 10.500 0 0 1 15 0" stroke="#aeb4ba"/><path d="M8 16.500a5.600 5.600 0 0 1 8 0"/><circle cx="12" cy="20" r="1.200" fill="currentColor"/>`, 20, 1.800)}
          ${line(svg`<path d="M2 9.500v5h4l6 5v-15l-6 5z"/><path d="M15 9q2.500 3 0 6M18 6.500q4.500 5.500 0 11"/><path d="M21 4q6 8 0 16" stroke="#b4bac0"/>`, 22, 1.700)}
          <svg width="22" height="20" viewBox="0 0 22 20"><rect x="2" y="5" width="17" height="12" rx="3" fill="none" stroke="#111" stroke-width="1.400"/><path d="M8 7.500h9v7H4.500V11z" fill="#111"/><path d="M20 9v4" stroke="#111" stroke-width="2.500"/><path d="M5 0 1 6h2.500L2 10l5-6H4.500z" fill="#111"/></svg>
        </div>
        <div class="date">15:54<br>12-03-2025</div>
      </div>`;
  }
}

/* ---------- page ---------- */

@customElement("app-root")
export class AppRoot extends LitElement {
  static styles = [base, css`
    :host { height: 100vh; overflow: hidden; display: flex; flex-direction: column; background: #f7f7f7; }
    .view { position: relative; flex: 1; min-height: 0; margin: 0 5px 4px; border-radius: 12px; overflow: hidden; display: flex; background: #fff; }
    .scroll { width: 19px; display: flex; flex-direction: column; align-items: center; padding: 10px 0; gap: 10px; color: #8b8b8b; }
    .track { flex: 1; padding-bottom: 7px; }
    .thumb { width: 11px; height: 51%; border-radius: 6px; background: #8b8b8b; }
    .shade { position: absolute; inset: 0; background: rgba(0, 0, 0, .8); display: grid; place-items: center; }
  `];

  render() {
    return html`
      <browser-frame></browser-frame>
      <div class="view">
        <side-nav></side-nav>
        <dashboard-view></dashboard-view>
        <div class="scroll">
          <svg width="12" height="10" viewBox="0 0 12 10" fill="currentColor"><path d="M6 0q1 0 1.500 1L12 8q.5 2-1 2H1q-1.500 0-1-2l4.500-7Q5 0 6 0z"/></svg>
          <div class="track"><div class="thumb"></div></div>
          <svg width="12" height="10" viewBox="0 0 12 10" fill="currentColor"><path d="M6 10q1 0 1.500-1L12 2q.5-2-1-2H1Q-.5 0 0 2l4.500 7q.5 1 1.500 1z"/></svg>
        </div>
        <div class="shade"><post-dialog></post-dialog></div>
      </div>
      <task-bar></task-bar>`;
  }
}
